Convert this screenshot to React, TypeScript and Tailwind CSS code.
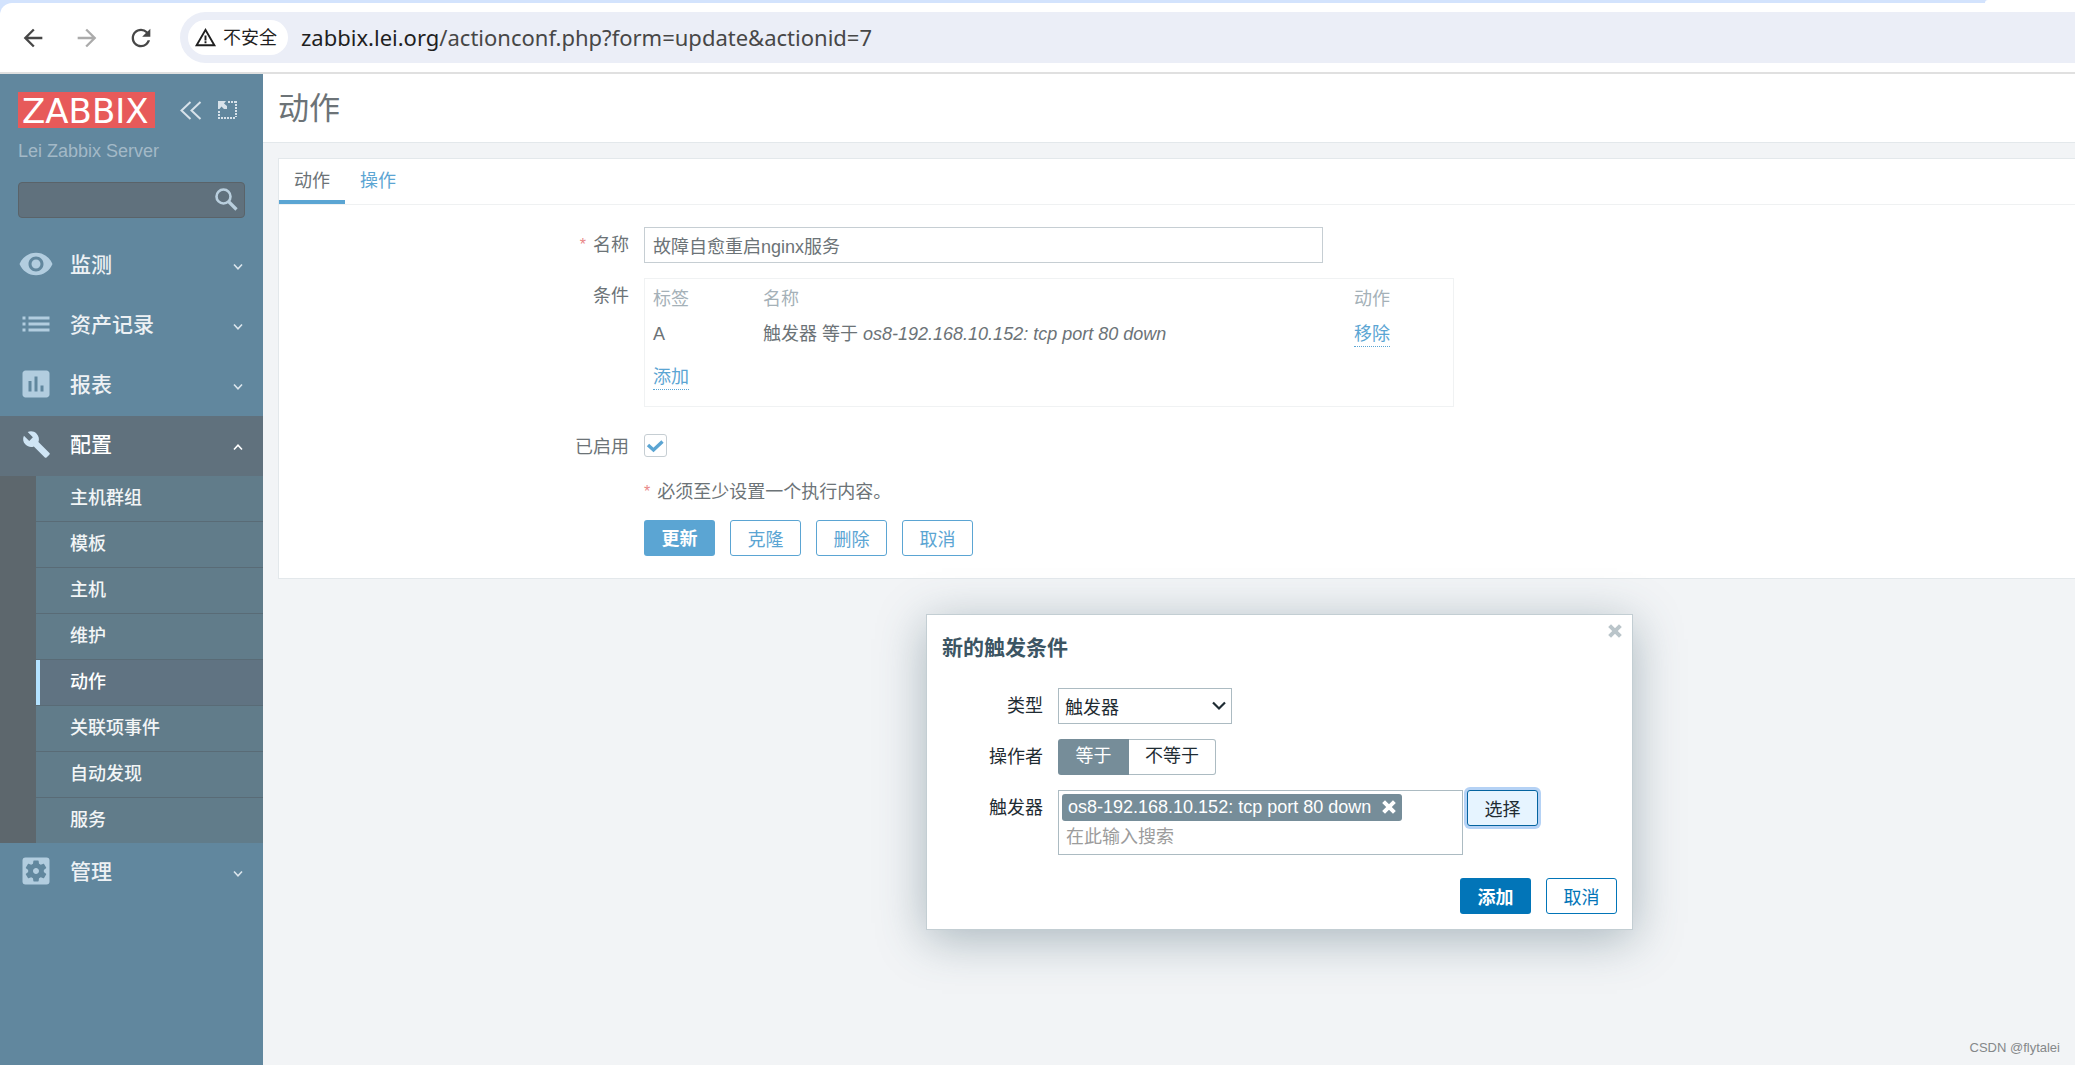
import { useState } from 'react';
import type { IconType } from 'react-icons';
import {
  MdArrowBack,
  MdArrowForward,
  MdAssessment,
  MdBuild,
  MdList,
  MdRefresh,
  MdSettingsApplications,
  MdVisibility,
  MdWarningAmber,
} from 'react-icons/md';

function Chevron({ up = false }: { up?: boolean }) {
  return (
    <svg width="10" height="8" viewBox="0 0 10 8" fill="none" stroke="currentColor" strokeWidth="1.6">
      <path d={up ? 'M1 6.5 5 2.2 9 6.5' : 'M1 1.5 5 5.8 9 1.5'} />
    </svg>
  );
}

function Cross({ className }: { className: string }) {
  return (
    <svg className={className} viewBox="0 0 14 14" stroke="currentColor" strokeWidth="4">
      <path d="M1.6 1.6 12.4 12.4M12.4 1.6 1.6 12.4" />
    </svg>
  );
}

function BrowserBar() {
  return (
    <header className="bg-[#d3e3fd]">
      <div className="flex h-[3px] justify-end">
        <div className="h-[3px] w-[90px] rounded-tl-[3px] bg-white" />
      </div>
      <div className="flex h-[71px] items-center rounded-tl-[12px] border-b-2 border-[#e0e0e0] bg-white pl-[19px]">
        <button aria-label="后退" className="text-[#474747]">
          <MdArrowBack size={28} />
        </button>
        <button aria-label="前进" className="ml-[26px] text-[#ababab]">
          <MdArrowForward size={28} />
        </button>
        <button aria-label="刷新" className="ml-[26px] text-[#474747]">
          <MdRefresh size={28} />
        </button>
        <div className="ml-[25px] flex h-[51px] flex-1 items-center rounded-l-full bg-[#ebeef7] pl-2">
          <button className="flex h-[35px] items-center gap-[6px] rounded-full bg-white pr-[11px] pl-[6px] text-[18px] text-[#1f1f1f]">
            <MdWarningAmber size={23} />
            <span className="pt-[2px]">不安全</span>
          </button>
          <div className="ml-[13px] pb-[2px] font-['Noto_Sans',sans-serif] text-[22px] leading-[30px] text-[#474747]">
            <span className="text-[#1f1f1f]">zabbix.lei.org</span>/actionconf.php?form=update&amp;actionid=7
          </div>
        </div>
      </div>
    </header>
  );
}

const subItems = ['主机群组', '模板', '主机', '维护', '动作', '关联项事件', '自动发现', '服务'];

const topItems: { label: string; Icon: IconType }[] = [
  { label: '监测', Icon: MdVisibility },
  { label: '资产记录', Icon: MdList },
  { label: '报表', Icon: MdAssessment },
];

type MenuButtonProps = { label: string; Icon: IconType; active?: boolean; iconSize?: number };

function MenuButton({ label, Icon, active = false, iconSize = 36 }: MenuButtonProps) {
  return (
    <button
      aria-expanded={active}
      className={
        active
          ? 'flex h-[60px] w-full items-center bg-[#60717d] pr-5 pl-[18px] text-[#cfe5f5]'
          : 'flex h-[60px] w-full items-center pr-5 pl-[18px] text-[#b2cddf]'
      }
    >
      <span className="flex w-9 justify-center pb-1">
        <Icon size={iconSize} />
      </span>
      <span
        className={
          active
            ? 'ml-4 pb-[2px] text-[21px] font-medium text-white'
            : 'ml-4 pb-[2px] text-[21px] font-medium text-[#edf1f4]'
        }
      >
        {label}
      </span>
      <span className={active ? 'ml-auto pt-[2px] text-white' : 'ml-auto pt-[2px] text-[#dbe5ec]'}>
        <Chevron up={active} />
      </span>
    </button>
  );
}

function Sidebar() {
  return (
    <aside className="w-[263px] shrink-0 bg-[#61879e]">
      <div className="flex items-center pt-[18px] pl-[18px]">
        <a
          href="#home"
          className="flex h-9 w-[137px] items-center bg-[#e75a5a] pt-px pl-1 font-['DejaVu_Sans',sans-serif] text-[34px] leading-9 text-white"
        >
          ZABBIX
        </a>
        <button aria-label="收起侧边栏" className="ml-[25px] text-[#d7e2ea]">
          <svg width="22" height="19" viewBox="0 0 22 19" fill="none" stroke="currentColor" strokeWidth="2">
            <path d="M10.500 1 1.500 9.500 10.500 18M20.500 1 11.500 9.500 20.500 18" />
          </svg>
        </button>
        <button aria-label="隐藏侧边栏" className="ml-[15px] text-[#d7e2ea]">
          <svg width="20" height="18" viewBox="0 0 20 18">
            <path
              d="M2 10v8M4 17h15M19 0v16M11 1h7"
              fill="none"
              stroke="currentColor"
              strokeWidth="2"
              strokeDasharray="2 1"
            />
            <path d="M1 0h8L7 2.500l3 2.500v3H7L4.500 5.500 2.500 8H1z" fill="currentColor" />
          </svg>
        </button>
      </div>
      <div className="mt-3 pl-[18px] text-[18px] leading-[22px] text-[#a3b9c7]">Lei Zabbix Server</div>
      <div className="relative mt-5 ml-[18px] h-9 w-[227px]">
        <input
          aria-label="搜索"
          className="h-9 w-full rounded-[4px] border border-[#5a6369] bg-[#60717d] px-2 text-[18px] text-white outline-none"
        />
        <button aria-label="搜索按钮" className="absolute top-[6px] right-[7px] text-[#b9cfde]">
          <svg width="23" height="23" viewBox="0 0 23 23" fill="none" stroke="currentColor">
            <circle cx="8.500" cy="8.500" r="7" strokeWidth="2.600" />
            <path d="M13.500 13.500 21.500 21.500" strokeWidth="3.200" />
          </svg>
        </button>
      </div>
      <nav className="mt-[18px]">
        {topItems.map(({ label, Icon }) => (
          <MenuButton key={label} label={label} Icon={Icon} />
        ))}
        <MenuButton label="配置" Icon={MdBuild} iconSize={29} active />
        <ul className="bg-[#5d676d] pl-9">
          {subItems.map((label) => (
            <li key={label} className="border-b border-[#596b76] last:border-b-0">
              <a
                href="#menu"
                className={
                  label === '动作'
                    ? 'flex h-[45px] items-center border-l-4 border-[#b3e2ff] bg-[#607382] pl-[30px] text-[18px] font-medium text-white'
                    : 'flex h-[45px] items-center bg-[#617c8a] pl-[34px] text-[18px] font-medium text-[#f2f5f6]'
                }
              >
                {label}
              </a>
            </li>
          ))}
        </ul>
        <MenuButton label="管理" Icon={MdSettingsApplications} />
      </nav>
    </aside>
  );
}

function Star() {
  return <span className="text-[16px] leading-6 text-[#e98787]">*</span>;
}

const outlineButton =
  'h-9 w-[71px] rounded-[3px] border border-[#5ba5d3] bg-white pt-[3px] text-[18px] leading-8 text-[#5ba5d3]';

function ActionForm() {
  const [name, setName] = useState('故障自愈重启nginx服务');
  const [enabled, setEnabled] = useState(true);
  return (
    <section className="mt-[15px] ml-[15px] border border-r-0 border-[#e3e8eb] bg-white">
      <div role="tablist" className="flex h-[46px] border-b border-[#eff1f2]">
        <button
          role="tab"
          aria-selected
          className="h-[45px] border-b-4 border-[#5ba5d3] px-[15px] pt-1 text-[18px] text-[#6c7377]"
        >
          动作
        </button>
        <button
          role="tab"
          aria-selected={false}
          className="h-[45px] border-b-4 border-transparent px-[15px] pt-1 text-[18px] text-[#5ba5d3]"
        >
          操作
        </button>
      </div>
      <form className="grid grid-cols-[350px_1fr] gap-x-[15px] pt-[22px] pb-[22px] text-[18px] leading-6 text-[#6c7377]">
        <label htmlFor="name" className="flex justify-end gap-[7px] pt-[6px]">
          <Star />
          名称
        </label>
        <input
          id="name"
          value={name}
          onChange={(e) => setName(e.target.value)}
          className="h-9 w-[679px] border border-[#c6ced3] px-2 text-[18px] outline-none"
        />
        <span className="mt-[15px] pt-[6px] text-right">条件</span>
        <div className="mt-[15px] h-[129px] w-[810px] border border-[#f0f2f3] pt-[2px] pl-2">
          <table className="w-full table-fixed text-left">
            <thead>
              <tr className="h-[35px] text-[#a5b1b8]">
                <th className="w-[110px] font-normal">标签</th>
                <th className="w-[591px] font-normal">名称</th>
                <th className="font-normal">动作</th>
              </tr>
            </thead>
            <tbody>
              <tr className="h-[35px]">
                <td>A</td>
                <td>
                  触发器 等于 <em>os8-192.168.10.152: tcp port 80 down</em>
                </td>
                <td className="pt-[2px]">
                  <button type="button" className="block border-b border-dotted border-[#5ba5d3] text-[#5ba5d3]">
                    移除
                  </button>
                </td>
              </tr>
              <tr className="h-[51px]">
                <td className="pt-[2px]">
                  <button type="button" className="block border-b border-dotted border-[#5ba5d3] text-[#5ba5d3]">
                    添加
                  </button>
                </td>
              </tr>
            </tbody>
          </table>
        </div>
        <label htmlFor="enabled" className="mt-[28px] text-right">
          已启用
        </label>
        <div className="relative mt-[27px] h-[23px] w-[23px]">
          <input
            id="enabled"
            type="checkbox"
            checked={enabled}
            onChange={(e) => setEnabled(e.target.checked)}
            className="block h-[23px] w-[23px] appearance-none rounded-[3px] border border-[#c6ced3] bg-white"
          />
          {enabled && (
            <svg className="pointer-events-none absolute top-0 left-0" width="23" height="23" viewBox="0 0 23 23" fill="none">
              <path d="M4 11 9.500 16 18.500 7.500" stroke="#5ba5d3" strokeWidth="3.400" />
            </svg>
          )}
        </div>
        <div className="col-start-2 mt-[21px] flex gap-[7px]">
          <Star />
          必须至少设置一个执行内容。
        </div>
        <div className="col-start-2 mt-4 flex gap-[15px]">
          <button
            type="button"
            className="h-9 w-[71px] rounded-[3px] bg-[#5ba5d3] pt-[3px] text-[18px] leading-[33px] font-bold text-white"
          >
            更新
          </button>
          <button type="button" className={outlineButton}>
            克隆
          </button>
          <button type="button" className={outlineButton}>
            删除
          </button>
          <button type="button" className={outlineButton}>
            取消
          </button>
        </div>
      </form>
    </section>
  );
}

function ConditionDialog() {
  return (
    <div
      role="dialog"
      aria-labelledby="dialog-title"
      className="absolute top-[614px] left-[926px] w-[707px] border border-[#c3ced3] bg-white px-[15px] pt-[17px] pb-[15px] text-[18px] leading-6 text-[#1f2c33] shadow-[0_9px_45px_rgba(60,90,104,0.4)]"
    >
      <button aria-label="关闭" className="absolute top-[9px] right-[10px] text-[#bac5ca]">
        <Cross className="h-[14px] w-[14px]" />
      </button>
      <h2 id="dialog-title" className="text-[21px] leading-8 font-bold text-[#3c5563]">
        新的触发条件
      </h2>
      <form className="mt-6 grid grid-cols-[101px_1fr] gap-x-[15px] gap-y-[15px]">
        <label htmlFor="type" className="pt-[6px] text-right">
          类型
        </label>
        <div className="relative h-9 w-[174px]">
          <select
            id="type"
            className="h-9 w-full appearance-none border border-[#acbbc2] bg-white px-[6px] pt-1 text-[18px] outline-none"
          >
            <option>触发器</option>
          </select>
          <svg className="pointer-events-none absolute top-[13px] right-[6px]" width="14" height="10" viewBox="0 0 14 10" fill="none">
            <path d="M1 1.500 7 7.500 13 1.500" stroke="#1f2c33" strokeWidth="2.200" />
          </svg>
        </div>
        <span className="pt-[6px] text-right">操作者</span>
        <div className="flex h-9">
          <label className="flex w-[71px] items-center justify-center rounded-l-[3px] bg-[#768d99] pb-[2px] text-white">
            <input type="radio" name="operator" defaultChecked className="sr-only" />
            等于
          </label>
          <label className="flex w-[87px] items-center justify-center rounded-r-[3px] border border-l-0 border-[#acbbc2] pb-[2px]">
            <input type="radio" name="operator" className="sr-only" />
            不等于
          </label>
        </div>
        <label htmlFor="trigger" className="pt-[6px] text-right">
          触发器
        </label>
        <div className="flex items-start gap-1">
          <div className="h-[65px] w-[405px] border border-[#acbbc2] p-[3px]">
            <div className="flex h-[27px] w-[340px] items-center justify-between rounded-[3px] bg-[#768d99] pr-[6px] pb-[1px] pl-[6px] text-white">
              os8-192.168.10.152: tcp port 80 down
              <button type="button" aria-label="移除触发器">
                <Cross className="h-[14px] w-[14px]" />
              </button>
            </div>
            <input
              id="trigger"
              placeholder="在此输入搜索"
              className="block h-[30px] w-full px-1 pt-[2px] text-[18px] outline-none placeholder:text-[#9c9c9c]"
            />
          </div>
          <button
            type="button"
            className="h-9 w-[71px] rounded-[3px] border border-[#0464a0] bg-[#e6f4ff] pt-1 text-[18px] shadow-[0_0_0_3px_#b5d2f5]"
          >
            选择
          </button>
        </div>
      </form>
      <div className="mt-[23px] flex justify-end gap-[15px]">
        <button className="h-9 w-[71px] rounded-[3px] bg-[#0275b8] pt-[3px] text-[18px] font-bold text-white">添加</button>
        <button className="h-9 w-[71px] rounded-[3px] border border-[#0275b8] pt-[3px] text-[18px] text-[#0275b8]">取消</button>
      </div>
    </div>
  );
}

export default function App() {
  return (
    <div className="relative flex min-h-screen flex-col overflow-hidden font-['Liberation_Sans','Noto_Sans_CJK_SC',sans-serif]">
      <BrowserBar />
      <div className="flex flex-1">
        <Sidebar />
        <main className="min-w-0 flex-1 bg-[#f2f4f6]">
          <h1 className="flex h-[69px] items-center border-b border-[#e3e8eb] bg-white pt-[2px] pl-[15px] text-[31px] text-[#6c7377]">
            动作
          </h1>
          <ActionForm />
        </main>
      </div>
      <ConditionDialog />
      <div className="absolute right-[15px] bottom-[7px] text-[13px] leading-5 text-[#85888a]">CSDN @flytalei</div>
    </div>
  );
}
